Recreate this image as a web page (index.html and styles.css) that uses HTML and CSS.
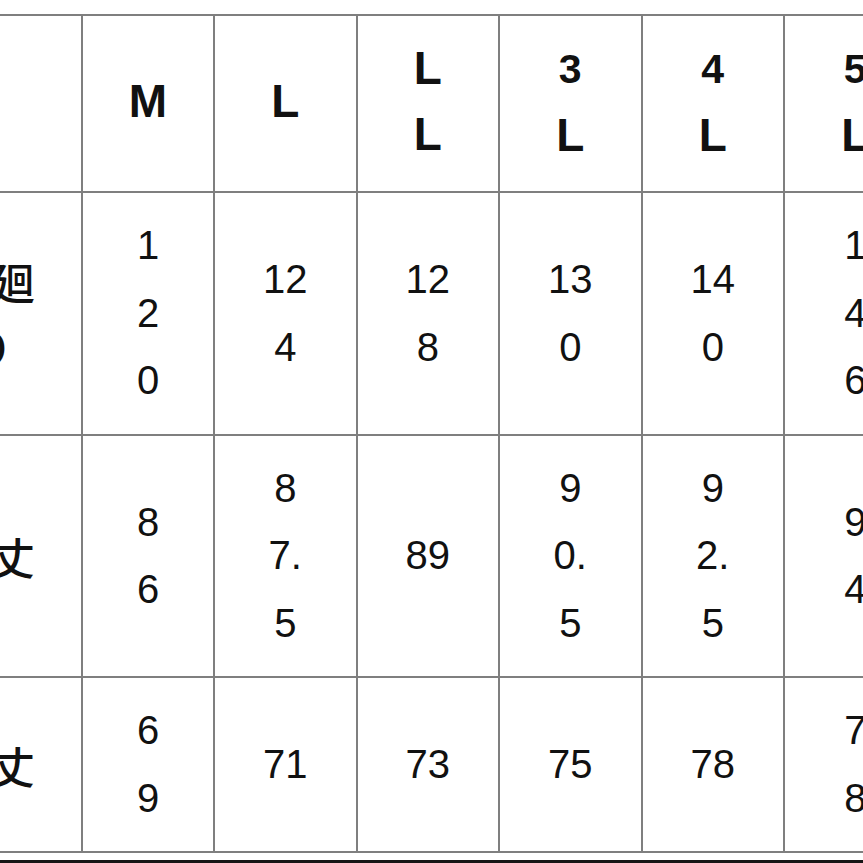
FILE: index.html
```html
<!DOCTYPE html>
<html lang="ja">
<head>
<meta charset="utf-8">
<title>サイズ表</title>
<link rel="stylesheet" href="styles.css">
</head>
<body>
<div class="page">
  <table class="size-table">
    <colgroup>
      <col class="c-label">
      <col class="c-m">
      <col class="c-size">
      <col class="c-size">
      <col class="c-size">
      <col class="c-size">
      <col class="c-size">
    </colgroup>
    <tr class="row-head">
      <th class="label"></th>
      <th>M</th>
      <th>L</th>
      <th>L<br>L</th>
      <th><span class="num">3</span><br>L</th>
      <th><span class="num">4</span><br>L</th>
      <th><span class="num">5</span><br>L</th>
    </tr>
    <tr class="row-chest">
      <td class="label">胸廻<br>り</td>
      <td>1<br>2<br>0</td>
      <td>12<br>4</td>
      <td>12<br>8</td>
      <td>13<br>0</td>
      <td>14<br>0</td>
      <td>1<br>4<br>6</td>
    </tr>
    <tr class="row-length">
      <td class="label">着丈</td>
      <td>8<br>6</td>
      <td>8<br>7.<br>5</td>
      <td>89</td>
      <td>9<br>0.<br>5</td>
      <td>9<br>2.<br>5</td>
      <td>9<br>4</td>
    </tr>
    <tr class="row-sleeve">
      <td class="label">袖丈</td>
      <td>6<br>9</td>
      <td>71</td>
      <td>73</td>
      <td>75</td>
      <td>78</td>
      <td>7<br>8</td>
    </tr>
  </table>
  <div class="next-rule"></div>
</div>
</body>
</html>
```

FILE: styles.css
```css
html, body {
  margin: 0;
  padding: 0;
  background: #ffffff;
  overflow: hidden;
}

.page {
  width: 863px;
  height: 863px;
  overflow: hidden;
  padding-top: 14px;
  box-sizing: border-box;
}

.size-table {
  margin-left: -101px;
  border-collapse: collapse;
  table-layout: fixed;
  width: 1026px;
  font-family: "Liberation Sans", Arial, "Noto Sans CJK JP", sans-serif;
  color: #111111;
}

.c-label { width: 182px; }
.c-m { width: 132px; }
.c-size { width: 142.5px; }

.size-table th,
.size-table td {
  border: 2px solid #7f7f7f;
  text-align: center;
  vertical-align: middle;
  padding: 0;
}

.size-table th {
  font-weight: bold;
  font-size: 46px;
  line-height: 66px;
  padding-bottom: 6px;
}

.size-table th .num {
  font-size: 41px;
}

.size-table td {
  font-size: 40px;
  line-height: 67.5px;
}

.size-table td.label {
  font-family: "Noto Sans CJK JP", sans-serif;
  font-weight: 500;
  font-size: 44px;
  line-height: 66px;
}

.row-head { height: 177px; }
.row-chest { height: 243px; }
.row-length { height: 242px; }
.row-sleeve { height: 175px; }

.next-rule {
  margin-top: 7px;
  height: 3px;
  background: #151515;
}
```
